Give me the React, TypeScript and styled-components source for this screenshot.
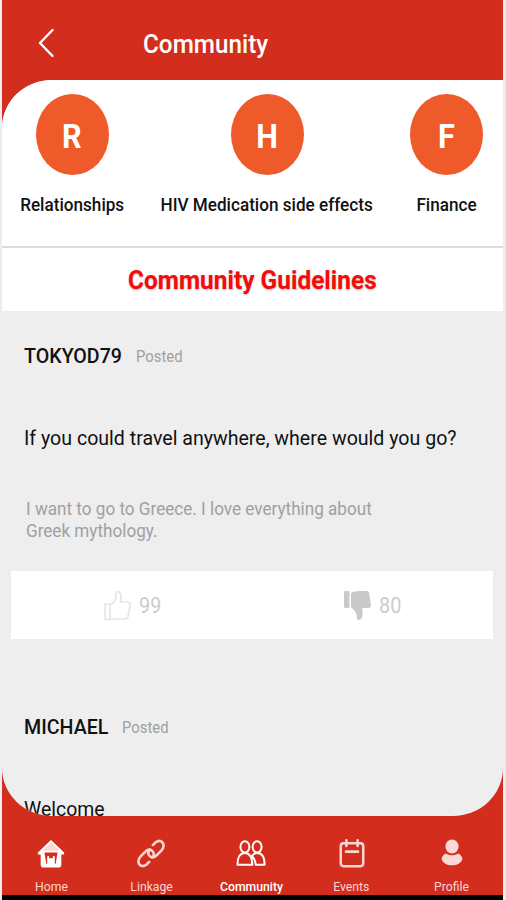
import React from "react";
import styled, { createGlobalStyle } from "styled-components";

const Global = createGlobalStyle`
  * { box-sizing: border-box; }
  body { margin: 0; background: #ededf0; font-family: Roboto, "Noto Sans", sans-serif; overflow: hidden; }
`;

const Screen = styled.div`
  width: 506px;
  height: 900px;
  padding: 0 3px 0 2px;
  display: flex;
  flex-direction: column;
  overflow: hidden;
  background: #ededf0;
`;

const Shell = styled.div`
  height: 895px;
  display: flex;
  flex-direction: column;
  background: #d32d1e;
`;

const Header = styled.header`
  height: 80px;
  padding: 9px 0 0 35px;
  display: flex;
  align-items: center;
  flex-shrink: 0;
`;

const BackButton = styled.button`
  width: 18px;
  height: 30px;
  padding: 0;
  margin: -3px 88px 0 0;
  border: 0;
  background: none;
  display: block;
`;

/* Text drawn with a slightly condensed Roboto. */
const Label = styled.span<{ $size: number; $weight?: number; $color?: string; $scale?: number; $origin?: string }>`
  display: block;
  white-space: pre;
  font-size: ${(p) => p.$size}px;
  line-height: 1.2;
  font-weight: ${(p) => p.$weight ?? 400};
  color: ${(p) => p.$color ?? "#111"};
  transform: scaleX(${(p) => p.$scale ?? 0.9});
  transform-origin: ${(p) => p.$origin ?? "left"} center;
`;

const Content = styled.main`
  height: 736px;
  flex-shrink: 0;
  overflow: hidden;
  background: #eeeeee;
  border-radius: 50px 0 50px 50px / 48px 0 48px 48px;
`;

const Topics = styled.section`
  height: 168px;
  background: #fff;
  border-bottom: 2px solid #dcdcdc;
  display: grid;
  grid-template-columns: 140px 250px 109px;
  padding-top: 14px;
`;

const Topic = styled.div`
  display: flex;
  flex-direction: column;
  align-items: center;
  gap: 19px;
`;

const Avatar = styled.div`
  width: 73px;
  height: 81px;
  border-radius: 50%;
  background: #ee5a29;
  display: flex;
  align-items: center;
  justify-content: center;
  padding-top: 3px;
`;

const Guidelines = styled.section`
  height: 63px;
  padding-top: 3px;
  background: #fff;
  display: flex;
  align-items: center;
  justify-content: center;
  text-shadow: 0 1px 2px rgba(0, 0, 0, 0.28);
`;

const Author = styled.div<{ $gap: number }>`
  display: grid;
  grid-template-columns: ${(p) => p.$gap}px auto;
  align-items: center;
  height: 26px;
`;

const Post = styled.article`
  padding: 33px 10px 0 22px;
`;

const Question = styled.div`
  margin-top: 56px;
`;

const Answer = styled.div`
  margin: 47px 0 0 2px;
`;

const Reactions = styled.div`
  height: 68px;
  margin: 28px 0 43px -13px;
  padding-top: 2px;
  background: #fff;
  display: grid;
  grid-template-columns: 240px 1fr;
`;

const Reaction = styled.div`
  display: flex;
  align-items: center;
  gap: 8px;
  padding-left: 93px;
`;

const Count = styled.div`
  padding-top: 2px;
`;

const Nav = styled.nav`
  flex: 1;
  display: grid;
  grid-template-columns: repeat(5, 100.2px);
  margin-left: -1px;
  padding-top: 22px;
`;

const NavItem = styled.div`
  display: flex;
  flex-direction: column;
  align-items: center;
  gap: 10px;
`;

const SystemBar = styled.div`
  flex: 1;
  background: #000;
`;

const icons: Record<string, React.ReactNode> = {
  Home: (
    <g>
      <path d="M16 1.5 2 15v2h3v11q0 3 3 3h16q3 0 3-3V17h3v-2Z" fill="#fff" />
      <path d="M15.9 4 7 13h18Z" fill="#f9d8d5" />
      <path d="M9 15h14l-2 12h-1v-8h-8v8h-1Z" fill="#d32d1e" />
      <path d="M12.5 19h2v3h3v-3h2v10h-7Z" fill="#fff" />
      <path d="M14 17h4v4h-4Z" fill="#d32d1e" />
    </g>
  ),
  Linkage: (
    <g fill="none" stroke="#fbd5d1" strokeWidth="2.8" strokeLinecap="round">
      <path d="m18 7 3-3c3-2 5-2 7 0s2 6-1 9l-5 5c-3 3-6 3-8 0s-1-4 1-6" />
      <path d="m14 25-3 3c-3 2-5 2-7 0s-2-6 1-9l5-5c3-3 6-3 8 0s1 4-1 6" />
    </g>
  ),
  Community: (
    <g fill="none" stroke="#fff" strokeWidth="2.1" strokeLinejoin="round">
      <ellipse cx="9.5" cy="9" rx="4.8" ry="6" />
      <ellipse cx="22.5" cy="9" rx="4.8" ry="6" />
      <path d="M1.5 28c0-8 3-12.5 8-12.5S17 20 17.500 28ZM17 18.500c1.500-2 3-3 5.500-3 5 0 8 4.500 8 12.500H21c0-3-1-6-4-9.500Z" />
    </g>
  ),
  Events: (
    <g fill="none" stroke="#fbd5d1" strokeWidth="2.7" strokeLinecap="round">
      <rect x="4" y="5" width="24" height="24.500" rx="3" />
      <path d="M10 2v6M22 2v6M9.500 14h13" />
    </g>
  ),
  Profile: (
    <g fill="#fbd9d6">
      <ellipse cx="16" cy="8.500" rx="7" ry="7.500" />
      <path d="M9.500 16c3 2.500 10 2.500 13 0 3 1 4.500 4 4.500 6-1 4-6 6.500-11 6.500S6 26 5 22c0-2 1.500-5 4.500-6Z" />
    </g>
  ),
};

const ThumbUp = () => (
  <svg width="27" height="31" viewBox="0 0 27 31" fill="none" stroke="#e5e5e5" strokeWidth="1.7" strokeLinejoin="round">
    <path d="M1 14h5v15.500H1ZM6 14.500c4-1 5.500-4 6-8V3q1-2 3-1c3 2 2 6 1.500 10H24q2.500 0 2 4l-2 10.500q-1 2.500-4 2.500H6Z" />
  </svg>
);

const ThumbDown = () => (
  <svg width="27" height="31" viewBox="0 0 27 31" fill="#c9c9c9">
    <rect y="1" width="5.5" height="17" rx="1" />
    <path d="M7 3q3-2 8-2h8q2 0 2 2l2 12q0 3-3 3h-6c1 4 1 8-1 11-2 2-4 1-4-1 0-5-2-7-6-11Z" />
  </svg>
);

const topics = [
  { letter: "R", name: "Relationships" },
  { letter: "H", name: "HIV Medication side effects" },
  { letter: "F", name: "Finance" },
];

const tabs = ["Home", "Linkage", "Community", "Events", "Profile"];

export default function App() {
  return (
    <Screen>
      <Global />
      <Shell>
        <Header>
          <BackButton aria-label="Back">
            <svg width="18" height="30" viewBox="0 0 18 30" fill="none" stroke="#fff" strokeWidth="2.4" strokeLinecap="round" strokeLinejoin="round">
              <path d="M15.500 2 3 15l12.500 13" />
            </svg>
          </BackButton>
          <Label $size={26} $weight={500} $color="#fff" $scale={0.934}>Community</Label>
        </Header>
        <Content>
          <Topics>
            {topics.map((t) => (
              <Topic key={t.name}>
                <Avatar>
                  <Label $size={34} $weight={700} $color="#fff" $origin="center">{t.letter}</Label>
                </Avatar>
                <Label $size={18.5} $weight={500} $scale={0.926} $origin="center">{t.name}</Label>
              </Topic>
            ))}
          </Topics>
          <Guidelines>
            <Label $size={26} $weight={700} $color="#fb0808" $scale={0.94} $origin="center">Community Guidelines</Label>
          </Guidelines>
          <Post>
            <Author $gap={112}>
              <Label $size={21} $weight={500} $scale={0.935}>TOKYOD79</Label>
              <Label $size={16.5} $color="#a0a0a0">Posted</Label>
            </Author>
            <Question>
              <Label $size={21} $scale={0.932}>If you could travel anywhere, where would you go?</Label>
            </Question>
            <Answer>
              <Label $size={18.5} $color="#a0a0a0" $scale={0.925}>{"I want to go to Greece. I love everything about\nGreek mythology."}</Label>
            </Answer>
            <Reactions>
              <Reaction>
                <ThumbUp />
                <Count><Label $size={22} $color="#cccccc">99</Label></Count>
              </Reaction>
              <Reaction>
                <ThumbDown />
                <Count><Label $size={22} $color="#cccccc">80</Label></Count>
              </Reaction>
            </Reactions>
          </Post>
          <Post>
            <Author $gap={98}>
              <Label $size={21} $weight={500} $scale={0.935}>MICHAEL</Label>
              <Label $size={16.5} $color="#a0a0a0">Posted</Label>
            </Author>
            <Question>
              <Label $size={21} $scale={0.925}>Welcome</Label>
            </Question>
          </Post>
        </Content>
        <Nav>
          {tabs.map((t) => (
            <NavItem key={t}>
              <svg width="30" height="31" viewBox="0 0 32 32">{icons[t]}</svg>
              <Label $size={13} $weight={t === "Community" ? 500 : 400} $color={t === "Community" ? "#fff" : "#fbd5d1"} $scale={0.94} $origin="center">{t}</Label>
            </NavItem>
          ))}
        </Nav>
      </Shell>
      <SystemBar />
    </Screen>
  );
}
